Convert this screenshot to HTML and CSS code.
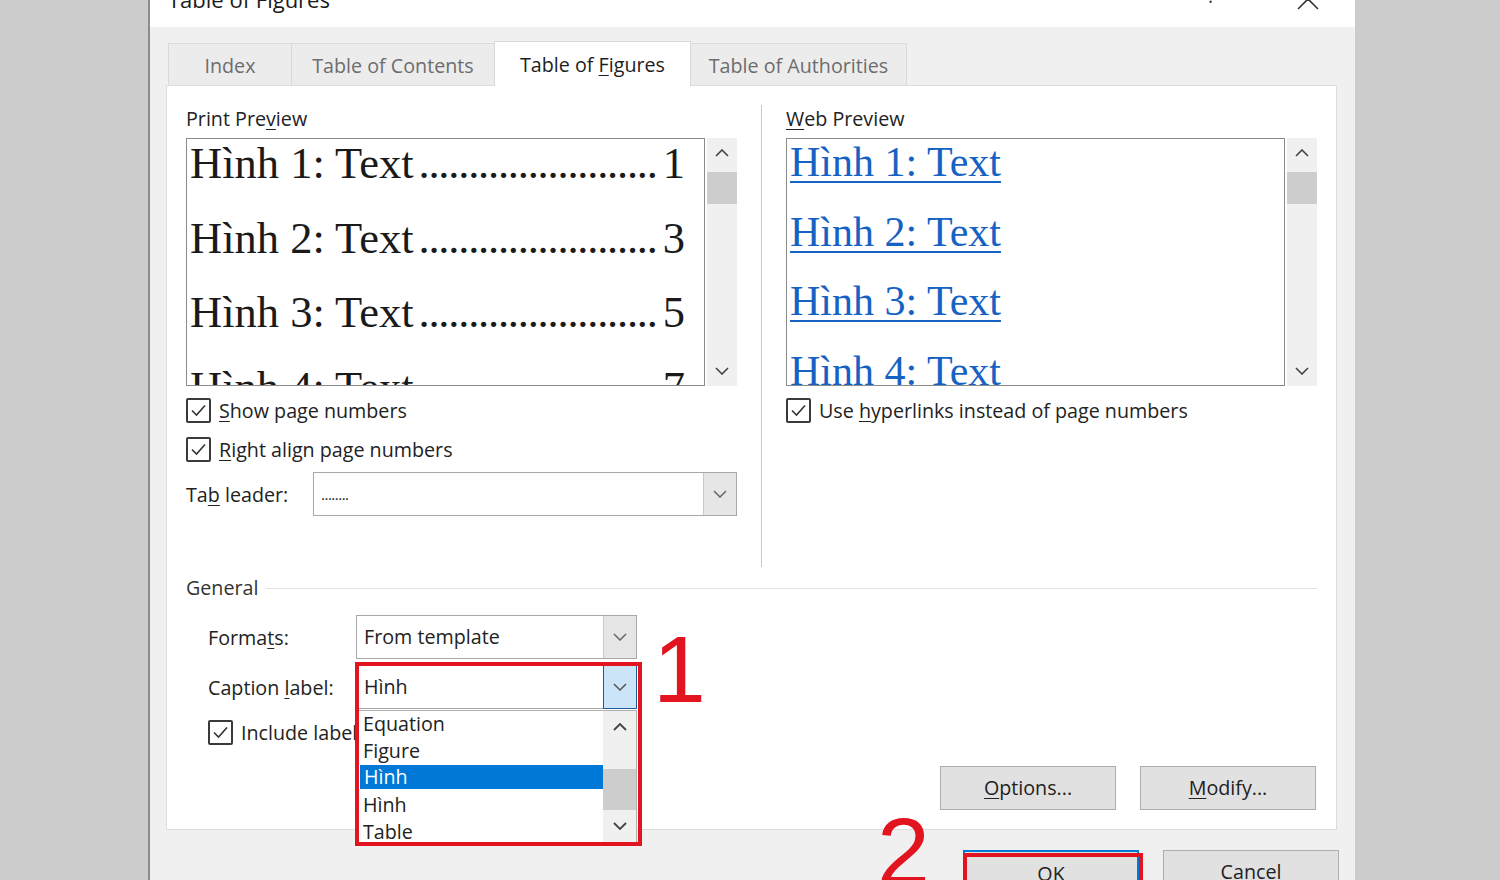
FILE: index.html
```html
<!DOCTYPE html>
<html>
<head>
<meta charset="utf-8">
<title>Table of Figures</title>
<link rel="stylesheet" href="styles.css">
</head>
<body>
<div class="dialog">
  <div class="titlebar">
    <div class="title">Table of Figures</div>
    <div class="help">?</div>
    <svg class="close" width="22" height="22" viewBox="0 0 22 22"><path d="M1 1L21 21M21 1L1 21" stroke="#333" stroke-width="1.6" fill="none"/></svg>
  </div>

  <div class="tabs">
    <div class="tab t-index">Index</div>
    <div class="tab t-toc">Table of Contents</div>
    <div class="tab t-tof active">Table of <u>F</u>igures</div>
    <div class="tab t-toa">Table of Authorities</div>
  </div>

  <div class="panel">
    <div class="top">
      <div class="col col-left">
        <div class="label">Print Pre<u>v</u>iew</div>
        <div class="preview">
          <div class="pbox">
            <div class="pline"><span>Hình 1: Text</span><span class="dots">........................</span><span class="num">1</span></div>
            <div class="pline"><span>Hình 2: Text</span><span class="dots">........................</span><span class="num">3</span></div>
            <div class="pline"><span>Hình 3: Text</span><span class="dots">........................</span><span class="num">5</span></div>
            <div class="pline"><span>Hình 4: Text</span><span class="dots">........................</span><span class="num">7</span></div>
          </div>
          <div class="scroll">
            <div class="arr"><svg width="14" height="8" viewBox="0 0 14 8"><path d="M1 7L7 1L13 7" stroke="#444" stroke-width="1.6" fill="none"/></svg></div>
            <div class="thumb"></div>
            <div class="spacer"></div>
            <div class="arr"><svg width="14" height="8" viewBox="0 0 14 8"><path d="M1 1L7 7L13 1" stroke="#444" stroke-width="1.6" fill="none"/></svg></div>
          </div>
        </div>
        <div class="check first">
          <span class="cb"><svg width="21" height="21" viewBox="0 0 21 21"><path d="M4 10.5L8.5 15L17 5.5" stroke="#333" stroke-width="1.6" fill="none"/></svg></span>
          <span><u>S</u>how page numbers</span>
        </div>
        <div class="check second">
          <span class="cb"><svg width="21" height="21" viewBox="0 0 21 21"><path d="M4 10.5L8.5 15L17 5.5" stroke="#333" stroke-width="1.6" fill="none"/></svg></span>
          <span><u>R</u>ight align page numbers</span>
        </div>
        <div class="leader-row">
          <span class="leader-label">Ta<u>b</u> leader:</span>
          <div class="combo combo-wide">
            <div class="ctext ctext-dots">........</div>
            <div class="cbtn"><svg width="14" height="8" viewBox="0 0 14 8"><path d="M1 1L7 7L13 1" stroke="#666" stroke-width="1.5" fill="none"/></svg></div>
          </div>
        </div>
      </div>

      <div class="sep"></div>

      <div class="col col-right">
        <div class="label"><u>W</u>eb Preview</div>
        <div class="preview">
          <div class="pbox wbox">
            <div class="wline">Hình 1: Text</div>
            <div class="wline">Hình 2: Text</div>
            <div class="wline">Hình 3: Text</div>
            <div class="wline">Hình 4: Text</div>
          </div>
          <div class="scroll">
            <div class="arr"><svg width="14" height="8" viewBox="0 0 14 8"><path d="M1 7L7 1L13 7" stroke="#444" stroke-width="1.6" fill="none"/></svg></div>
            <div class="thumb"></div>
            <div class="spacer"></div>
            <div class="arr"><svg width="14" height="8" viewBox="0 0 14 8"><path d="M1 1L7 7L13 1" stroke="#444" stroke-width="1.6" fill="none"/></svg></div>
          </div>
        </div>
        <div class="check first">
          <span class="cb"><svg width="21" height="21" viewBox="0 0 21 21"><path d="M4 10.5L8.5 15L17 5.5" stroke="#333" stroke-width="1.6" fill="none"/></svg></span>
          <span>Use <u>h</u>yperlinks instead of page numbers</span>
        </div>
      </div>
    </div>

    <div class="general">General</div>

    <div class="frow frow-formats">
      <span class="flabel">Forma<u>t</u>s:</span>
      <div class="combo">
        <div class="ctext">From template</div>
        <div class="cbtn"><svg width="14" height="8" viewBox="0 0 14 8"><path d="M1 1L7 7L13 1" stroke="#666" stroke-width="1.5" fill="none"/></svg></div>
      </div>
    </div>

    <div class="frow frow-caption">
      <span class="flabel">Caption <u>l</u>abel:</span>
      <div class="combo combo-open">
        <div class="ctext">Hình</div>
        <div class="cbtn cbtn-hot"><svg width="14" height="8" viewBox="0 0 14 8"><path d="M1 1L7 7L13 1" stroke="#555" stroke-width="1.5" fill="none"/></svg></div>
        <div class="popup">
          <div class="plist">
            <div class="item">Equation</div>
            <div class="item">Figure</div>
            <div class="item sel">Hình</div>
            <div class="item">Hình</div>
            <div class="item">Table</div>
          </div>
          <div class="pscroll">
            <div class="parr"><svg width="14" height="8" viewBox="0 0 14 8"><path d="M1 7L7 1L13 7" stroke="#444" stroke-width="1.8" fill="none"/></svg></div>
            <div class="pthumb"></div>
            <div class="spacer"></div>
            <div class="parr"><svg width="14" height="8" viewBox="0 0 14 8"><path d="M1 1L7 7L13 1" stroke="#444" stroke-width="1.8" fill="none"/></svg></div>
          </div>
        </div>
        <div class="redbox redbox-1"></div>
        <div class="mark mark-1">1</div>
      </div>
    </div>

    <div class="check include">
      <span class="cb"><svg width="21" height="21" viewBox="0 0 21 21"><path d="M4 10.5L8.5 15L17 5.5" stroke="#333" stroke-width="1.6" fill="none"/></svg></span>
      <span>Include label and number</span>
    </div>

    <div class="btnrow">
      <div class="btn"><u>O</u>ptions...</div>
      <div class="btn"><u>M</u>odify...</div>
    </div>
  </div>

  <div class="footer">
    <div class="btn btn-ok">OK<div class="redbox redbox-2"></div></div>
    <div class="btn">Cancel</div>
  </div>
  <div class="mark mark-2">2</div>
</div>
</body>
</html>
```

FILE: styles.css
```css
* { box-sizing: border-box; }
html, body {
  margin: 0;
  padding: 0;
}
body {
  width: 1500px;
  height: 880px;
  overflow: hidden;
  background: #cccccc;
  font-family: "Open Sans", "Noto Sans", sans-serif;
  font-size: 19.7px;
  color: #222;
}
u { text-decoration-thickness: 1px; text-underline-offset: 3px; }

.dialog {
  position: relative;
  margin-left: 148px;
  width: 1207px;
  height: 880px;
  border-left: 2px solid #8c8c8c;
  background: #f0f0f0;
}

/* title bar */
.titlebar {
  height: 27px;
  background: #fff;
  display: flex;
  overflow: hidden;
  padding-left: 18px;
}
.title {
  font-size: 22px;
  line-height: 22px;
  margin-top: -12px;
  color: #1a1a1a;
  flex: 1;
}
.help {
  font-size: 20px;
  line-height: 20px;
  margin-top: -14px;
  color: #444;
  width: 90px;
}
.close {
  margin-top: -12px;
  margin-right: 36px;
}

/* tabs */
.tabs {
  display: flex;
  align-items: flex-end;
  height: 44px;
  margin-top: 14px;
  padding-left: 18px;
  position: relative;
  z-index: 2;
}
.tab {
  height: 42px;
  line-height: 44px;
  text-align: center;
  color: #6d6d6d;
  background: #ececec;
  border: 1px solid #d9d9d9;
  border-bottom: none;
  margin-right: -1px;
  white-space: nowrap;
}
.t-index { width: 124px; }
.t-toc { width: 204px; }
.t-tof { width: 197px; }
.t-toa { width: 217px; }
.tab.active {
  height: 45px;
  line-height: 46px;
  background: #fff;
  color: #1e1e1e;
  margin-bottom: -1px;
  position: relative;
  z-index: 3;
}

/* panel */
.panel {
  margin-left: 16px;
  width: 1171px;
  height: 745px;
  background: #fff;
  border: 1px solid #dcdcdc;
  padding: 19px 19px 0 19px;
}
.top {
  display: flex;
}
.col-left { width: 551px; }
.col-right { width: 531px; }
.sep {
  width: 1px;
  height: 462px;
  background: #c8c8c8;
  margin: 0 24px;
}
.label {
  line-height: 24px;
  margin-top: 2px;
  color: #222;
}
.preview {
  display: flex;
  margin-top: 7px;
  height: 248px;
}
.pbox {
  flex: 1;
  border: 1px solid #8a8a8a;
  background: #fff;
  overflow: hidden;
  padding: 0 19px 0 3px;
  font-family: "Liberation Serif", "Times New Roman", serif;
  font-size: 44.5px;
  color: #1a1a1a;
}
.pline {
  display: flex;
  line-height: 49px;
  height: 49px;
  margin-bottom: 25.5px;
  white-space: nowrap;
}
.pline > span:first-child { margin-right: 5px; }
.dots {
  flex: 1;
  overflow: hidden;
  letter-spacing: -1.2px;
  margin-right: 4px;
}
.wbox { padding-left: 3px; }
.wline {
  font-size: 42px;
  line-height: 46px;
  height: 46px;
  margin-bottom: 23.5px;
  color: #1662c4;
  text-decoration: underline;
  text-decoration-thickness: 2px;
  text-underline-offset: 5px;
  white-space: nowrap;
}
.scroll {
  width: 30px;
  margin-left: 2px;
  background: #f0f0f0;
  display: flex;
  flex-direction: column;
}
.arr {
  height: 30px;
  display: flex;
  align-items: center;
  justify-content: center;
}
.thumb {
  margin-top: 4px;
  height: 32px;
  background: #cdcdcd;
}
.spacer { flex: 1; }

/* checkboxes */
.check {
  display: flex;
  align-items: center;
  height: 25px;
  white-space: nowrap;
}
.check.first { margin-top: 12px; }
.check.second { margin-top: 14px; }
.cb {
  width: 25px;
  height: 25px;
  border: 2px solid #3a3a3a;
  border-radius: 2px;
  margin-right: 8px;
  display: flex;
  align-items: center;
  justify-content: center;
  background: #fff;
  flex: none;
}

.leader-row {
  display: flex;
  align-items: center;
  margin-top: 10px;
}
.leader-label { width: 127px; }
.combo {
  position: relative;
  display: flex;
  width: 281px;
  height: 44px;
  border: 1px solid #a8a8a8;
  background: #fff;
}
.combo-wide { width: 424px; }
.ctext {
  flex: 1;
  line-height: 42px;
  padding-left: 7px;
  color: #222;
}
.ctext-dots {
  font-size: 15px;
  letter-spacing: -0.5px;
}
.cbtn {
  width: 33px;
  border-left: 1px solid #c8c8c8;
  background: #e6e6e6;
  display: flex;
  align-items: center;
  justify-content: center;
}
.cbtn-hot {
  background: #cce4f7;
  border: 1px solid #1d5d93;
  margin: -1px -1px -1px 0;
  width: 34px;
}

/* general */
.general {
  display: flex;
  align-items: center;
  line-height: 24px;
  margin-top: 9px;
  color: #333;
}
.general::after {
  content: "";
  flex: 1;
  height: 1px;
  background: #e2e2e2;
  margin-left: 8px;
}
.frow {
  display: flex;
  align-items: center;
  padding-left: 22px;
}
.frow-formats { margin-top: 15px; }
.frow-caption { margin-top: 6px; position: relative; z-index: 5; }
.flabel { width: 148px; color: #222; }

.popup {
  position: absolute;
  left: 1px;
  top: 44px;
  width: 279px;
  height: 133px;
  background: #fff;
  border: 1px solid #b0b0b0;
  display: flex;
}
.plist {
  flex: 1;
  margin-top: -1px;
}
.item {
  height: 27px;
  line-height: 27px;
  padding-left: 4px;
  color: #222;
}
.item.sel {
  background: #0078d7;
  color: #fff;
  height: 24px;
  line-height: 24px;
  margin: 1px 0 2px 1px;
}
.pscroll {
  width: 33px;
  background: #f0f0f0;
  display: flex;
  flex-direction: column;
}
.parr {
  height: 32px;
  display: flex;
  align-items: center;
  justify-content: center;
}
.pthumb {
  margin-top: 26px;
  height: 42px;
  background: #cdcdcd;
}

.redbox {
  position: absolute;
  border: 4px solid #e2141f;
  pointer-events: none;
}
.redbox-1 {
  left: -2px;
  top: -4px;
  width: 287px;
  height: 184px;
}
.mark {
  position: absolute;
  font-family: "Liberation Sans", Arial, sans-serif;
  font-size: 95px;
  line-height: 95px;
  color: #e2141f;
}
.mark-1 {
  left: 296px;
  top: -44px;
}
.mark-2 {
  left: 727px;
  top: 804px;
}

.check.include {
  margin-top: 11px;
  padding-left: 22px;
}

.btnrow {
  display: flex;
  justify-content: flex-end;
  gap: 24px;
  margin-top: 21px;
  padding-right: 1px;
}
.btn {
  position: relative;
  width: 176px;
  height: 44px;
  line-height: 42px;
  text-align: center;
  background: #e1e1e1;
  border: 1px solid #adadad;
  color: #222;
}
.footer {
  display: flex;
  justify-content: flex-end;
  gap: 24px;
  margin-top: 20px;
  padding-right: 16px;
}
.btn-ok {
  border: 2px solid #0078d7;
  line-height: 44px;
}
.redbox-2 {
  left: -2px;
  top: 1px;
  width: 180px;
  height: 50px;
}
```
